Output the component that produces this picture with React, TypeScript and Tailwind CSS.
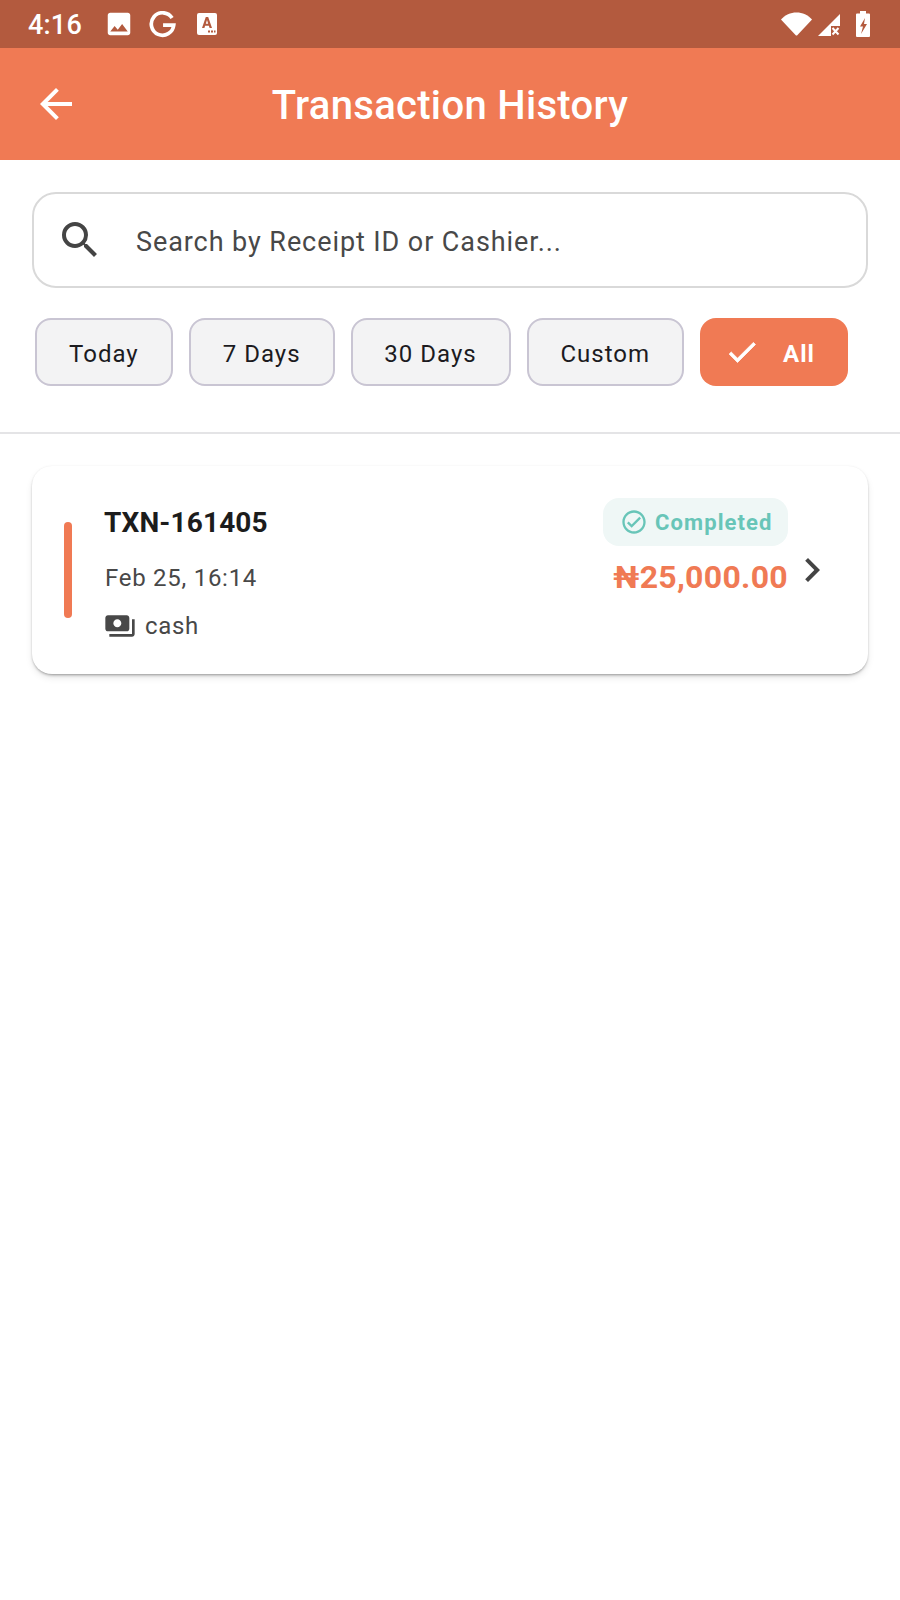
import { MdArrowBack, MdChevronRight, MdImage, MdOutlineCheckCircle, MdPayments, MdSearch } from 'react-icons/md';

const filters = [
    { label: 'Today', width: 'w-[137.75px]' },
    { label: '7 Days', width: 'w-[145.75px]' },
    { label: '30 Days', width: 'w-[160px]' },
    { label: 'Custom', width: 'w-[157.5px]' },
];

const StatusBar = () => (
    <div className="flex h-12 items-center justify-between bg-[#b35a3e] pl-7 pr-[30px] text-white">
        <div className="flex items-center">
            <span className="w-[54px] pt-0.5 text-[27px] leading-none font-medium tracking-[0.2px]">4:16</span>
            <MdImage className="ml-[22px] h-[30px] w-[30px]" />
            <svg viewBox="0 0 24 24" className="ml-[15px] h-[27px] w-[27px]" fill="none" stroke="currentColor" strokeWidth="3.3">
                <path d="M20.500 6.200A10 10 0 1 0 22 12.600H12.500" />
            </svg>
            <svg viewBox="0 0 20 22" className="ml-[21px] h-[22px] w-5">
                <path fill="currentColor" d="M2 0h16a2 2 0 0 1 2 2v18a2 2 0 0 1-2 2H2a2 2 0 0 1-2-2V2a2 2 0 0 1 2-2z" />
                <path fill="#b35a3e" d="M8.800 4h2.400L15 15h-2.400l-.7-2.200H8.100L7.400 15H5zM8.800 10.800h2.400L10 7z" />
                <path fill="#b35a3e" d="M11 17.500h2v2h-2zM14 17.500h2v2h-2zM17 17.500h1.500v2H17z" />
            </svg>
        </div>
        <div className="flex items-center">
            <svg viewBox="0 0 31 24" className="h-6 w-[31px]">
                <path fill="currentColor" d="M0 7.500C4 3 9.500.5 15.500.5S27 3 31 7.500L16.500 23a1.400 1.400 0 0 1-2 0z" />
            </svg>
            <svg viewBox="0 0 22 22" className="ml-[6px] mt-0.5 h-[22px] w-[22px]">
                <path fill="currentColor" d="M22 0v12h-9v10H0z" />
                <path stroke="currentColor" strokeWidth="2" d="M14.500 14l6 6.500M20.500 14l-6 6.500" />
            </svg>
            <svg viewBox="0 0 14 26" className="ml-4 h-[26px] w-[14px]">
                <path fill="currentColor" d="M4 0h6v2.500h3a1 1 0 0 1 1 1V25a1 1 0 0 1-1 1H1a1 1 0 0 1-1-1V3.500a1 1 0 0 1 1-1h3z" />
                <path fill="#b35a3e" d="M9 7L4 15.500h3L5 23l6-10H8z" />
            </svg>
        </div>
    </div>
);

const Header = () => (
    <div className="relative flex h-28 items-center justify-center bg-[#f07a54] text-white">
        <MdArrowBack className="absolute left-8 top-8 h-12 w-12" />
        <h1 className="pt-1 text-[40px] leading-none font-medium tracking-[0.32px]">Transaction History</h1>
    </div>
);

const Filters = () => (
    <div className="flex items-center px-8 pt-[30px] pb-[46px]">
        <div className="flex gap-4 pl-[3px]">
            {filters.map((f) => (
                <button
                    key={f.label}
                    className={`${f.width} h-[68px] rounded-2xl border-2 border-[#c9c5d3] bg-[#f3f3f4] pt-1 text-[24px] tracking-[1px] text-[#1c1b1f]`}
                >
                    {f.label}
                </button>
            ))}
            <button className="flex h-[68px] w-[148px] items-center rounded-2xl bg-[#f07a54] pl-[24px] text-white">
                <svg viewBox="0 0 24 24" className="h-9 w-9">
                    <path fill="currentColor" stroke="currentColor" strokeWidth="0.5" d="M9 16.170L4.830 12l-1.420 1.410L9 19 21 7l-1.410-1.410z" />
                </svg>
                <span className="ml-[23px] pt-1 text-[24px] font-bold tracking-[1px]">All</span>
            </button>
        </div>
    </div>
);

const TransactionCard = () => (
    <div className="mx-8 mt-8 flex items-center rounded-[20px] bg-white p-8 shadow-[0_2px_3px_-1px_rgba(0,0,0,0.35),0_4px_8px_-2px_rgba(0,0,0,0.14),0_0_2px_rgba(0,0,0,0.06)]">
        <div className="h-24 w-2 rounded-full bg-[#f07a54]" />
        <div className="ml-8 flex flex-1 flex-col">
            <div className="h-12 pt-px text-[28px] leading-[48px] font-bold tracking-[0.15px] text-[#1c1c1c]">TXN-161405</div>
            <div className="mt-4 ml-px h-8 text-[24px] leading-8 tracking-[0.73px] text-[#484848]">Feb 25, 16:14</div>
            <div className="mt-4 flex h-8 items-center text-[#484848]">
                <MdPayments className="h-8 w-8" />
                <span className="ml-[9px] text-[24px] leading-8 tracking-[0.7px]">cash</span>
            </div>
        </div>
        <div className="flex flex-col items-end self-start">
            <div className="flex h-12 w-[185px] items-center rounded-2xl bg-[#eff7f6] pl-[17px] text-[#68c5b8]">
                <MdOutlineCheckCircle className="h-7 w-7" />
                <span className="ml-[7px] text-[22px] font-bold tracking-[1.1px]">Completed</span>
            </div>
            <div className="mt-2 pt-px text-[32px] leading-[44px] font-bold tracking-[0.3px] text-[#f07a54]">₦25,000.00</div>
        </div>
        <MdChevronRight className="h-12 w-12 text-[#444444]" />
    </div>
);

export default function App() {
    return (
        <div className="min-h-[1600px] bg-white font-['Roboto',sans-serif]">
            <StatusBar />
            <Header />
            <div className="px-8 pt-8">
                <div className="flex h-[96px] items-center rounded-[24px] border-2 border-[#d9d9d9] bg-white pl-[22px]">
                    <MdSearch className="h-12 w-12 shrink-0 text-[#444444]" />
                    <input
                        readOnly
                        placeholder="Search by Receipt ID or Cashier..."
                        className="ml-[32px] flex-1 bg-transparent pt-1 text-[27px] tracking-[0.92px] outline-none placeholder:text-[#484848]"
                    />
                </div>
            </div>
            <Filters />
            <div className="h-0.5 bg-[#e4e4e6]" />
            <TransactionCard />
        </div>
    );
}
